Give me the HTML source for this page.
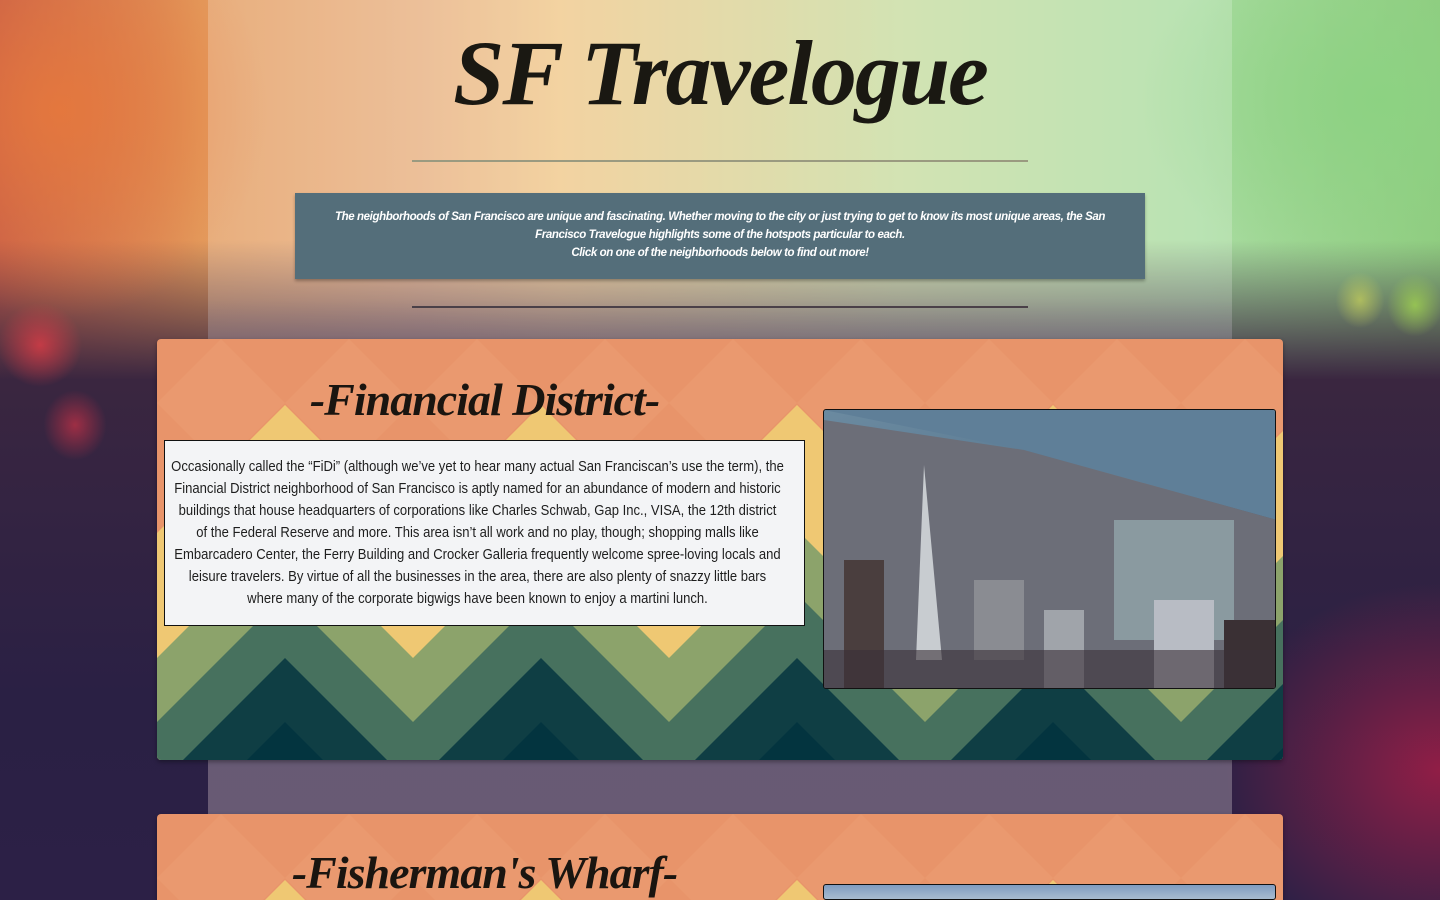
<!DOCTYPE html>
<html><head><meta charset="utf-8"><style>
*{margin:0;padding:0;box-sizing:border-box}
html,body{width:1440px;height:900px;overflow:hidden}
body{position:relative;font-family:"Liberation Sans",sans-serif;
background:
radial-gradient(ellipse 60px 60px at 40px 345px,rgba(220,60,70,.8),transparent 70%),
radial-gradient(ellipse 45px 50px at 75px 425px,rgba(200,50,70,.7),transparent 70%),
radial-gradient(ellipse 40px 45px at 1415px 305px,rgba(160,210,80,.8),transparent 70%),
radial-gradient(ellipse 35px 40px at 1360px 300px,rgba(200,210,90,.7),transparent 70%),
radial-gradient(ellipse 300px 250px at 1440px 770px,rgba(170,30,70,.8),transparent 75%),
radial-gradient(ellipse 260px 260px at 60px 110px,rgba(230,120,60,.9),transparent 80%),
radial-gradient(ellipse 300px 220px at 1380px 100px,rgba(140,210,130,.95),transparent 80%),
linear-gradient(180deg,rgba(0,0,0,0) 0,rgba(0,0,0,0) 240px,#3a2640 380px,#2a2044 700px,#2c2046 900px),
linear-gradient(90deg,#c8604a 0,#e39a5c 200px,#e8b080 420px,#f0c88a 560px,#c8dca0 900px,#a8dca0 1200px,#90cc80 1440px);
background-size:1440px 900px;background-repeat:no-repeat}
.col{position:absolute;left:208px;top:0;width:1024px;height:900px;background:rgba(255,255,255,.2)}
.col2{position:absolute;left:208px;top:300px;width:1024px;height:600px;background:linear-gradient(180deg,rgba(120,100,120,0),rgba(110,95,120,.7) 120px,rgba(110,95,120,.75))}
h1{position:absolute;left:0;width:1440px;top:18px;text-align:center;font-family:"Liberation Serif",serif;font-style:italic;font-weight:bold;font-size:92px;line-height:110px;color:#1a1812;letter-spacing:-2px}
.hr{position:absolute;left:412px;width:616px;height:2px}
.intro{position:absolute;left:295px;top:193px;width:850px;height:86px;background:#546e7a;box-shadow:0 2px 3px rgba(0,0,0,.3);color:#fff;font-style:italic;font-weight:bold;font-size:11.5px;line-height:18px;text-align:center;padding-top:15px;letter-spacing:-.4px}
.card{position:absolute;left:157px;width:1126px;height:421px;border-radius:4px;overflow:hidden;box-shadow:0 2px 4px rgba(0,0,0,.35)}
.card svg{position:absolute;left:0;top:0}
.card h2{position:absolute;left:7px;width:641px;text-align:center;font-family:"Liberation Serif",serif;font-style:italic;font-weight:bold;font-size:46px;line-height:54px;color:#1a1510;letter-spacing:-1px}
.txt{position:absolute;left:7px;top:101px;width:641px;height:186px;background:#f3f4f6;border:1px solid #111;overflow:hidden}
.txt div{width:690px;transform:scaleX(.9);transform-origin:0 0;font-size:14.5px;line-height:22px;text-align:center;color:#1e1e1e;padding-top:15px;margin-left:2px}
.img{position:absolute;left:666px;top:70px;width:453px;height:280px;border:1px solid #111;border-radius:3px;overflow:hidden;
background:linear-gradient(160deg,#6b8aa0 0,#5d7d95 30%,#7a8088 42%,#5a5c66 60%,#3a3238 100%)}
</style></head><body>
<div class="col"></div><div class="col2"></div>
<h1>SF Travelogue</h1>
<div class="hr" style="top:160px;background:#9a9a80"></div>
<div class="intro">The neighborhoods of San Francisco are unique and fascinating. Whether moving to the city or just trying to get to know its most unique areas, the San<br>Francisco Travelogue highlights some of the hotspots particular to each.<br>Click on one of the neighborhoods below to find out more!</div>
<div class="hr" style="top:306px;background:#4a4048"></div>

<svg width="0" height="0" style="position:absolute">
<defs>
<pattern id="y" width="256" height="421" patternUnits="userSpaceOnUse"><polygon points="0,194 128,66 256,194 256,421 0,421" fill="#efc873"/></pattern>
<pattern id="g" width="256" height="421" patternUnits="userSpaceOnUse"><polygon points="0,319 128,191 256,319 256,421 0,421" fill="#8ca36b"/></pattern>
<pattern id="m" width="256" height="421" patternUnits="userSpaceOnUse"><polygon points="0,383 128,255 256,383 256,421 0,421" fill="#47715e"/></pattern>
<pattern id="d" width="256" height="421" patternUnits="userSpaceOnUse"><polygon points="0,447 128,319 256,447" fill="#0f3e44"/></pattern>
<pattern id="e" width="256" height="421" patternUnits="userSpaceOnUse"><polygon points="90,421 128,383 166,421" fill="#03343f"/></pattern>
<pattern id="o" width="128" height="128" patternUnits="userSpaceOnUse"><polygon points="0,64 64,0 128,64 64,128" fill="#eb9d74" opacity=".5"/></pattern>
</defs></svg>

<div class="card" style="top:339px">
<svg width="1126" height="421">
<rect width="1126" height="421" fill="#e8946a"/>
<rect width="1126" height="130" fill="url(#o)"/>
<rect width="1126" height="421" fill="url(#y)"/>
<rect width="1126" height="421" fill="url(#g)"/>
<rect width="1126" height="421" fill="url(#m)"/>
<rect width="1126" height="421" fill="url(#d)"/>
<rect width="1126" height="421" fill="url(#e)"/>
</svg>
<h2 style="top:34px">-Financial District-</h2>
<div class="txt"><div>Occasionally called the “FiDi” (although we’ve yet to hear many actual San Franciscan’s use the term), the<br>Financial District neighborhood of San Francisco is aptly named for an abundance of modern and historic<br>buildings that house headquarters of corporations like Charles Schwab, Gap Inc., VISA, the 12th district<br>of the Federal Reserve and more. This area isn’t all work and no play, though; shopping malls like<br>Embarcadero Center, the Ferry Building and Crocker Galleria frequently welcome spree-loving locals and<br>leisure travelers. By virtue of all the businesses in the area, there are also plenty of snazzy little bars<br>where many of the corporate bigwigs have been known to enjoy a martini lunch.</div></div>
<div class="img">
<svg width="453" height="280">
<polygon points="0,0 453,0 453,110 200,40 0,0" fill="#5f7f98"/>
<polygon points="0,10 200,40 453,110 453,280 0,280" fill="#6c6e78"/>
<polygon points="100,55 118,250 92,250" fill="#c8ccd0"/>
<rect x="290" y="110" width="120" height="120" fill="#8a9aa0"/>
<rect x="330" y="190" width="60" height="90" fill="#b8bcc4"/>
<rect x="20" y="150" width="40" height="130" fill="#4a3e3e"/>
<rect x="150" y="170" width="50" height="80" fill="#8a8c92"/>
<rect x="220" y="200" width="40" height="80" fill="#a0a4aa"/>
<rect x="400" y="210" width="53" height="70" fill="#3a3034"/>
<rect x="0" y="240" width="453" height="40" fill="#3a3038" opacity=".6"/>
</svg>
</div>
</div>

<div class="card" style="top:814px;height:86px;border-radius:4px 4px 0 0">
<svg width="1126" height="86">
<rect width="1126" height="86" fill="#e8946a"/>
<rect width="1126" height="86" fill="url(#o)"/>
<rect width="1126" height="86" fill="url(#y)"/>
</svg>
<h2 style="top:32px">-Fisherman's Wharf-</h2>
<div class="img" style="height:16px;background:linear-gradient(180deg,#7f9cc0,#a8bcd0)"></div>
</div>
</body></html>
